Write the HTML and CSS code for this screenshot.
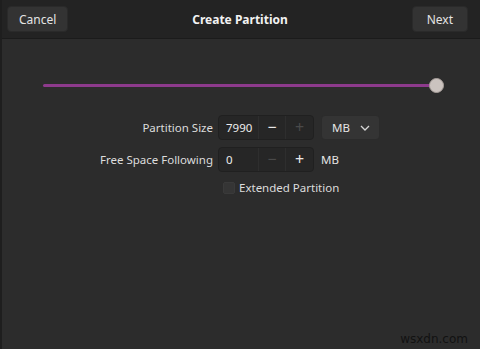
FILE: index.html
```html
<!DOCTYPE html>
<html lang="en">
<head>
  <meta charset="UTF-8" />
  <meta name="viewport" content="width=device-width, initial-scale=1.0" />
  <title>Create Partition</title>
  <link rel="stylesheet" href="styles.css">
</head>
<body>

  <header class="headerbar">
    <button class="btn">Cancel</button>
    <div class="title">Create Partition</div>
    <button class="btn btn-next">Next</button>
  </header>

  <main class="content">
    <div class="slider">
      <div class="slider-track"></div>
      <div class="slider-knob"></div>
    </div>

    <div class="form">
      <div class="label">Partition Size</div>
      <div class="field">
        <div class="spin">
          <span class="spin-value">7990</span>
          <span class="spin-btn">&minus;</span>
          <span class="spin-btn dim">+</span>
        </div>
        <div class="dropdown">
          <span>MB</span>
          <svg width="10" height="6" viewBox="0 0 10 6"><path d="M1 1 L5 5 L9 1" fill="none" stroke="#d6d6d6" stroke-width="1.3"/></svg>
        </div>
      </div>

      <div class="label">Free Space Following</div>
      <div class="field">
        <div class="spin">
          <span class="spin-value">0</span>
          <span class="spin-btn dim">&minus;</span>
          <span class="spin-btn">+</span>
        </div>
        <span class="unit">MB</span>
      </div>

      <div></div>
      <label class="check">
        <span class="box"></span>
        <span>Extended Partition</span>
      </label>
    </div>
  </main>

  <div class="watermark">wsxdn.com</div>

</body>
</html>
```

FILE: styles.css
```css
* {
  margin: 0;
  padding: 0;
  box-sizing: border-box;
}

body {
  font-family: 'Noto Sans', 'Open Sans', sans-serif;
  font-size: 11.5px;
  background: #2c2c2c;
  color: #e0e0e0;
  width: 480px;
  height: 349px;
  overflow: hidden;
  position: relative;
  border-left: 2px solid #1e1e1e;
}

.headerbar {
  height: 39px;
  background: #232323;
  border-bottom: 1px solid #1b1b1b;
  display: flex;
  align-items: center;
  justify-content: space-between;
  padding: 0 12px 0 5px;
}

.btn {
  font-family: inherit;
  font-size: 12px;
  color: #e4e4e4;
  background: #333333;
  border: 1px solid #2a2a2a;
  border-radius: 4px;
  height: 26px;
  padding: 0 11px;
}

.btn-next {
  padding: 0 14px;
}

.title {
  font-weight: 700;
  font-size: 12px;
  color: #f2f2f2;
}

.content {
  padding-top: 38px;
}

.slider {
  position: relative;
  margin: 0 43px 0 41px;
  height: 16px;
}

.slider-track {
  position: absolute;
  left: 0;
  right: 0;
  top: 7px;
  height: 3px;
  border-radius: 2px;
  background: #8d3a8c;
}

.slider-knob {
  position: absolute;
  right: -7px;
  top: 1px;
  width: 15px;
  height: 15px;
  border-radius: 50%;
  background: #cbc3bf;
  border: 1px solid #a89f9b;
}

.form {
  display: grid;
  grid-template-columns: 211px auto;
  column-gap: 5px;
  row-gap: 7px;
  margin-top: 22px;
  align-items: center;
}

.label {
  text-align: right;
  color: #dcdcdc;
}

.field {
  display: flex;
  align-items: center;
  gap: 7px;
}

.spin {
  display: flex;
  height: 25px;
  width: 96px;
  background: #262626;
  border: 1px solid #202020;
  border-radius: 4px;
}

.spin-value {
  width: 39px;
  padding-left: 7px;
  line-height: 23px;
  color: #ececec;
}

.spin-btn {
  width: 28px;
  text-align: center;
  line-height: 22px;
  font-size: 16px;
  color: #e8e8e8;
  border-left: 1px solid #2e2e2e;
}

.spin-btn.dim {
  color: #4a4a4a;
}

.dropdown {
  display: flex;
  align-items: center;
  justify-content: space-between;
  width: 59px;
  height: 25px;
  padding: 0 9px 0 10px;
  background: #343434;
  border: 1px solid #2b2b2b;
  border-radius: 4px;
  color: #e4e4e4;
}

.unit {
  color: #e4e4e4;
}

.check {
  display: flex;
  align-items: center;
  gap: 4px;
  padding-left: 5px;
  margin-top: 1px;
  color: #dcdcdc;
}

.box {
  width: 12px;
  height: 12px;
  background: #353535;
  border: 1px solid #3a3a3a;
  border-radius: 2px;
}

.watermark {
  position: absolute;
  right: 12px;
  bottom: 3px;
  font-family: 'DejaVu Sans', sans-serif;
  font-size: 12px;
  color: #121212;
}
```
